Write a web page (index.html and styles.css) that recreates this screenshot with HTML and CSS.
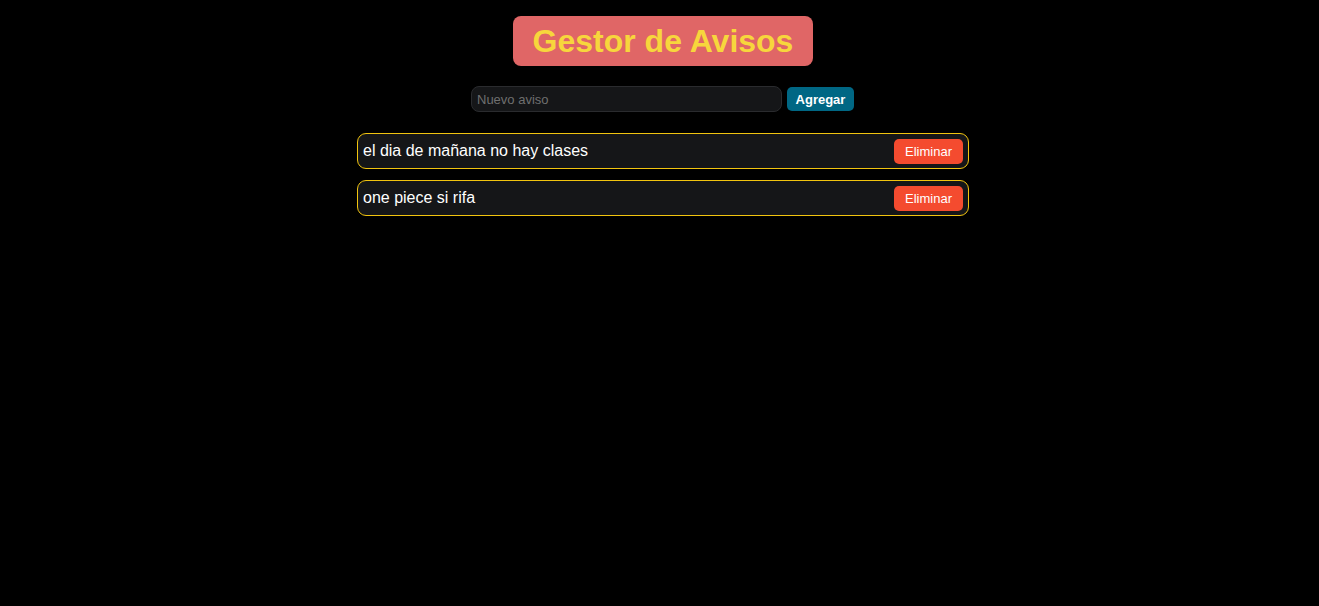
FILE: index.html
```html
<!DOCTYPE html>
<html lang="es">
<head>
<meta charset="utf-8">
<title>Gestor de Avisos</title>
<link rel="stylesheet" href="styles.css">
</head>
<body>
<main class="app">
  <h1 class="title">Gestor de Avisos</h1>
  <form class="add-form" onsubmit="return false">
    <input class="add-input" type="text" placeholder="Nuevo aviso">
    <button class="add-btn" type="submit">Agregar</button>
  </form>
  <ul class="list">
    <li class="item"><span class="item-text">el dia de mañana no hay clases</span><button class="del-btn">Eliminar</button></li>
    <li class="item"><span class="item-text">one piece si rifa</span><button class="del-btn">Eliminar</button></li>
  </ul>
</main>
</body>
</html>
```
FILE: styles.css
```css
html, body {
  margin: 0;
  padding: 0;
  background: #000;
  font-family: "Liberation Sans", Arial, sans-serif;
  color: #fff;
}
.app {
  display: flex;
  flex-direction: column;
  align-items: center;
  padding: 16px 0 0 7px;
}
.title {
  margin: 0;
  background: #e06666;
  color: #f7d63c;
  font-size: 32px;
  font-weight: bold;
  line-height: 38px;
  padding: 6px 0;
  width: 300px;
  white-space: nowrap;
  box-sizing: border-box;
  text-align: center;
  border-radius: 8px;
}
.add-form {
  display: flex;
  align-items: center;
  gap: 5px;
  margin-top: 20px;
  padding-right: 1px;
}
.add-input {
  width: 311px;
  height: 26px;
  box-sizing: border-box;
  background: #151618;
  border: 1px solid #2a2b2e;
  border-radius: 8px;
  color: #fff;
  font-family: "Liberation Sans", Arial, sans-serif;
  font-size: 13px;
  padding: 0 5px;
  outline: none;
}
.add-input::placeholder {
  color: #6f6f6f;
}
.add-btn {
  width: 67px;
  height: 24px;
  background: #006784;
  color: #fff;
  border: none;
  border-radius: 5px;
  font-family: "Liberation Sans", Arial, sans-serif;
  font-size: 13px;
  font-weight: bold;
  padding: 0;
}
.list {
  list-style: none;
  margin: 21px 0 0;
  padding: 0;
  width: 612px;
  display: flex;
  flex-direction: column;
  gap: 11px;
}
.item {
  display: flex;
  align-items: center;
  justify-content: space-between;
  height: 36px;
  box-sizing: border-box;
  background: #151618;
  border: 1px solid #f1c40f;
  border-radius: 9px;
  padding: 0 5px 0 5px;
}
.item-text {
  font-size: 16px;
}
.del-btn {
  width: 69px;
  height: 25px;
  background: #f44b2f;
  color: #fff;
  border: none;
  border-radius: 5px;
  font-family: "Liberation Sans", Arial, sans-serif;
  font-size: 13px;
  padding: 0;
}
```
